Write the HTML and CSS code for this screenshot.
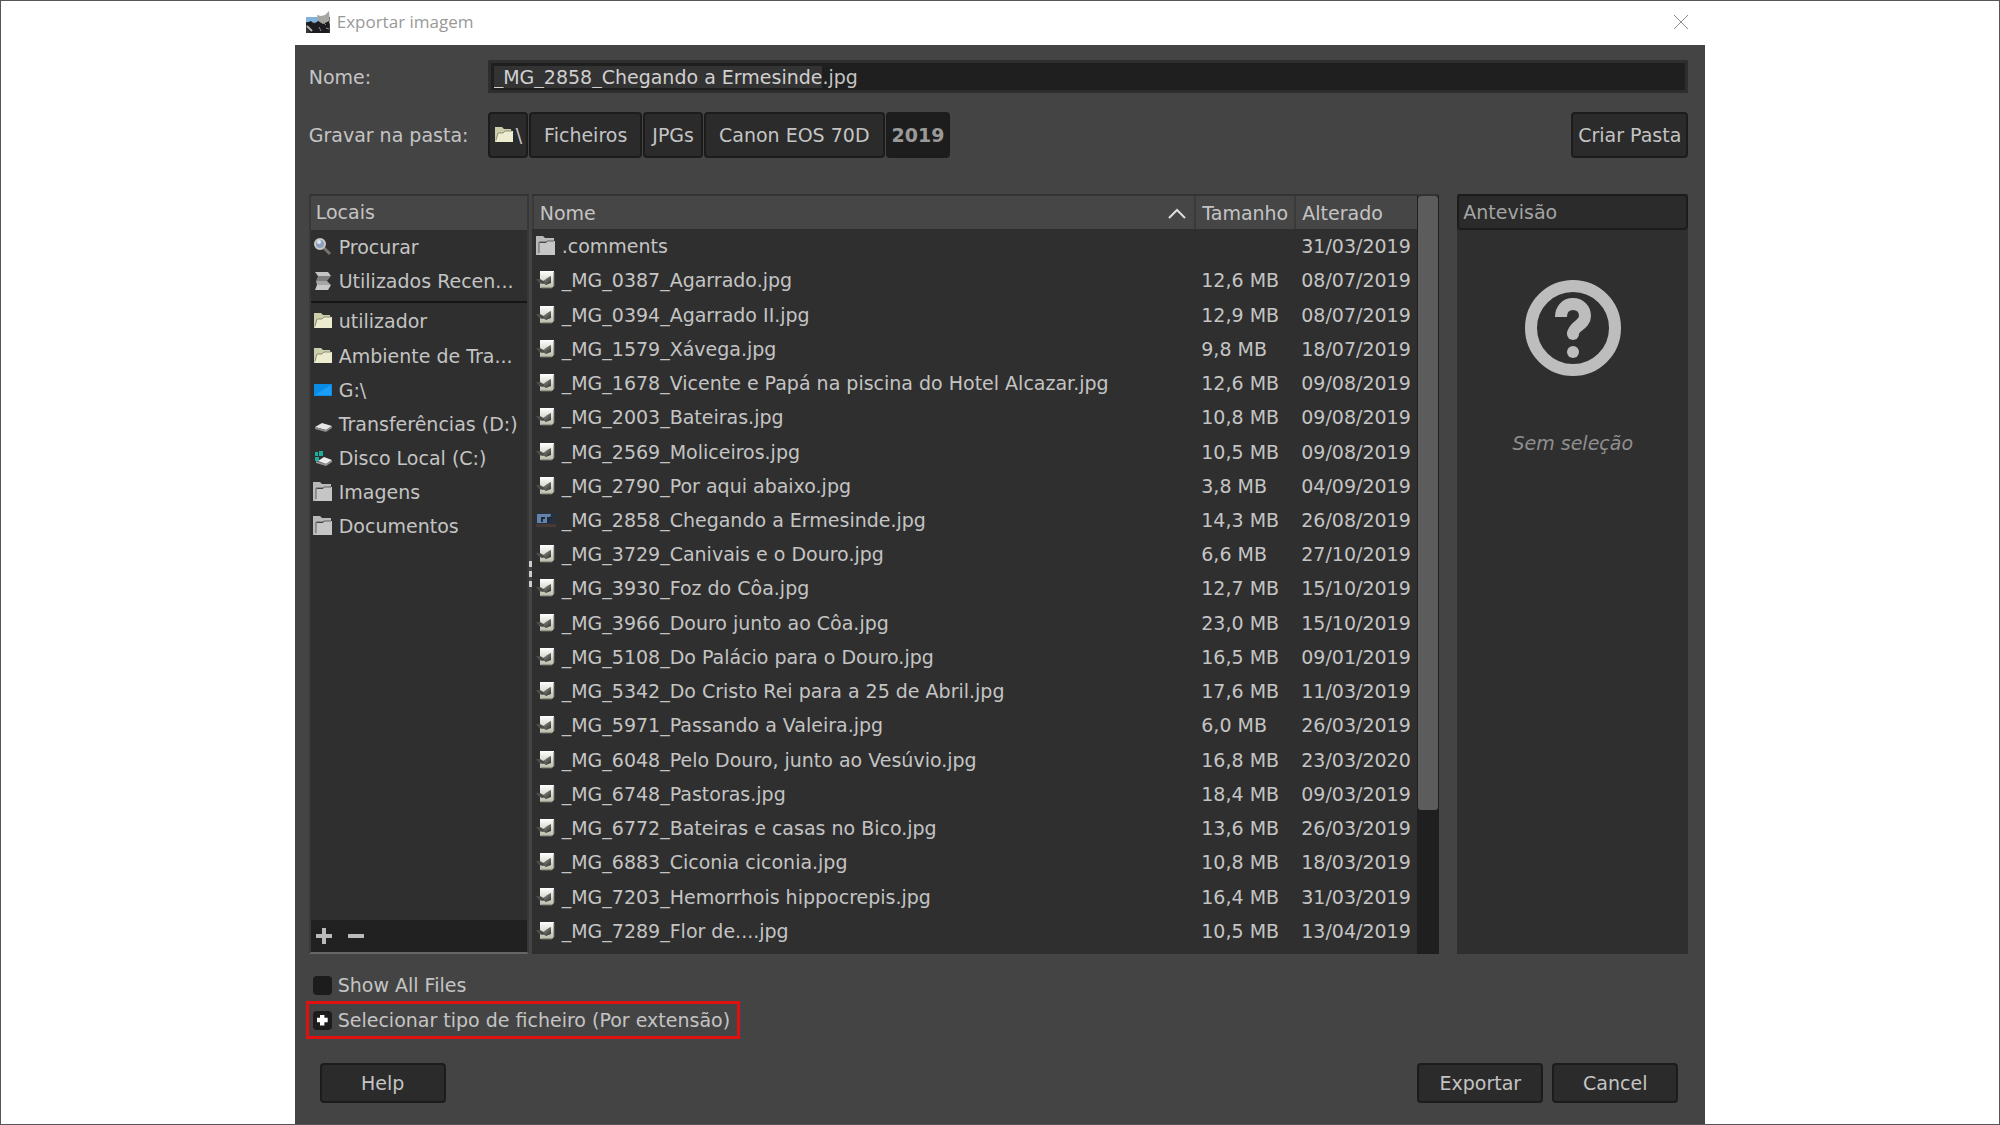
FILE: index.html
```
<!DOCTYPE html>
<html lang="pt">
<head>
    <meta charset="UTF-8">
    <meta name="viewport" content="width=device-width, initial-scale=1.0">
    <title>Exportar imagem</title>
    <link rel="stylesheet" href="styles.css">
</head>
<body>
    <svg class="sprite" aria-hidden="true">
        <linearGradient id="paper" x1="0" y1="0" x2="0" y2="1">
            <stop offset="0" stop-color="#ffffff"/>
            <stop offset="1" stop-color="#b9bba9"/>
        </linearGradient>
        <linearGradient id="brush" x1="0" y1="0" x2="1" y2="1">
            <stop offset="0" stop-color="#a5a5a0"/>
            <stop offset="1" stop-color="#2c2c2a"/>
        </linearGradient>
        <symbol id="icon-file" viewBox="0 0 20 20">
            <path d="M4 1h14v15l-2 2H4z" fill="url(#paper)"/>
            <path d="M5 12c3-1 5-4 10-6v7l-5 2z" fill="url(#brush)"/>
            <path d="M0 9h4l5 3-2 2-4-1z" fill="#4b4b47"/>
            <path d="M18 2v14l-2 2H5" fill="none" stroke="#6f7066"/>
        </symbol>
        <symbol id="icon-folder" viewBox="0 0 20 20">
            <path d="M0 0h7l2 2h9v4H4v13H0z" fill="#b9b9b9"/>
            <path d="M4 7h6l1-2h8v14H3V9z" fill="#c6c6c6"/>
            <path d="M3 17V6h7l1-1h7" fill="none" stroke="#5e5e5e"/>
        </symbol>
        <symbol id="icon-home" viewBox="0 0 20 20">
            <path d="M1 2h7l2 2h7v13H1z" fill="#cccda9"/>
            <path d="M4 8h5l2-2h8v11H2z" fill="#ecedd0"/>
            <path d="M2 15L4 8h5l2-2h7" fill="none" stroke="#8e8f74"/>
        </symbol>
        <symbol id="icon-search" viewBox="0 0 20 20">
            <path d="M11 11l6 6" stroke="#77736c" stroke-width="3"/>
            <circle cx="7" cy="7" r="5" fill="#8aa0bd" stroke="#c9c9c9" stroke-width="2"/>
            <circle cx="6" cy="5" r="2" fill="#dfe8f2"/>
        </symbol>
        <symbol id="icon-recent" viewBox="0 0 20 20">
            <path d="M2 1h13l3 4H5z" fill="#c4c4c4"/>
            <path d="M5 5h13l-4 5H3z" fill="#7d7d7d"/>
            <path d="M3 10h11l4 4H4z" fill="#a6a6a6"/>
            <path d="M4 14h14l-3 5H2z" fill="#c9c9c9"/>
        </symbol>
        <symbol id="icon-desktop" viewBox="0 0 20 20">
            <path d="M1 4h18v12H1z" fill="#0a8be6"/>
            <path d="M2 15L18 5v10z" fill="#1b9ff5"/>
        </symbol>
        <symbol id="icon-drive" viewBox="0 0 20 20">
            <path d="M2 13l7-4 10 3-6 4z" fill="#e6e6e6"/>
            <path d="M2 13l11 3 6-4v2l-6 4-11-3z" fill="#8a8a8a"/>
        </symbol>
        <symbol id="icon-system" viewBox="0 0 20 20">
            <path d="M2 4h3v4H2zM6 3h4v5H6zM2 9h4v4H2z" fill="#1fae9c"/>
            <path d="M5 13l6-4 8 3-6 4z" fill="#ececec"/>
            <path d="M3 13l10 3 6-4v2l-6 4-10-3z" fill="#8f9694"/>
        </symbol>
        <symbol id="icon-thumb" viewBox="0 0 20 20">
            <path d="M0 3h20v14H0z" fill="#27303f"/>
            <path d="M1 4h14l-2 9H1z" fill="#6483aa"/>
            <path d="M5 7h4v2H7v3H5zM11 7h5v2h-2v4h-3z" fill="#222a38"/>
            <path d="M0 14h20v3H0z" fill="#463a37"/>
        </symbol>
        <symbol id="icon-app" viewBox="0 0 24 24">
            <path d="M0 7h24v16H0z" fill="#35363b"/>
            <path d="M0 7h14l-2 6-12-1z" fill="#82b2dc"/>
            <path d="M11 5l4 1 4-1 4-4 1 12-4 4-5-2-3-5z" fill="#a5a5a1"/>
            <path d="M0 13l5-2 3 3 4-3 5 3 6-3v12H4z" fill="#1c1c20"/>
            <path d="M1 16l5 5" stroke="#b5b1aa" stroke-width="2"/>
            <path d="M17 12l3 3M13 17l2 4M20 18l3 1" stroke="#8d8a85"/>
        </symbol>
    </svg>

    <main class="dialog">
        <header class="titlebar">
            <svg class="app-icon"><use href="#icon-app"/></svg>
            <h1>Exportar imagem</h1>
            <button class="close" type="button" aria-label="Fechar">
                <svg viewBox="0 0 16 16"><path d="M1 1l14 14M15 1L1 15"/></svg>
            </button>
        </header>

        <form class="content">
            <div class="row">
                <label class="row-label" for="name">Nome:</label>
                <input class="name" type="text" id="name" value="_MG_2858_Chegando a Ermesinde.jpg" spellcheck="false">
            </div>

            <div class="row path-row">
                <span class="row-label">Gravar na pasta:</span>
                <nav class="path">
                    <button type="button" class="btn root"><svg class="icon"><use href="#icon-home"/></svg>\</button>
                    <button type="button" class="btn wide">Ficheiros</button>
                    <button type="button" class="btn">JPGs</button>
                    <button type="button" class="btn wide">Canon EOS 70D</button>
                    <button type="button" class="btn current">2019</button>
                </nav>
                <button type="button" class="btn create">Criar Pasta</button>
            </div>

            <div class="panels">
                <aside class="places">
                    <h2>Locais</h2>
                    <ul>
                        <li><svg class="icon"><use href="#icon-search"/></svg>Procurar</li>
                        <li><svg class="icon"><use href="#icon-recent"/></svg>Utilizados Recen...</li>
                        <li class="after-line"><svg class="icon"><use href="#icon-home"/></svg>utilizador</li>
                        <li><svg class="icon"><use href="#icon-home"/></svg>Ambiente de Tra...</li>
                        <li><svg class="icon"><use href="#icon-desktop"/></svg>G:\</li>
                        <li><svg class="icon"><use href="#icon-drive"/></svg>Transferências (D:)</li>
                        <li><svg class="icon"><use href="#icon-system"/></svg>Disco Local (C:)</li>
                        <li><svg class="icon"><use href="#icon-folder"/></svg>Imagens</li>
                        <li><svg class="icon"><use href="#icon-folder"/></svg>Documentos</li>
                    </ul>
                    <div class="places-tools">
                        <button type="button" aria-label="Adicionar"><svg viewBox="0 0 16 16"><path d="M8 0v16M0 8h16"/></svg></button>
                        <button type="button" aria-label="Remover"><svg viewBox="0 0 16 16"><path d="M0 8h16"/></svg></button>
                    </div>
                </aside>

                <div class="grip"><i></i><i></i><i></i></div>

                <section class="files">
                    <div class="files-list">
                        <table>
                            <thead>
                                <tr>
                                    <th><span class="sorted">Nome <svg viewBox="0 0 18 12"><path d="M1 11l8-8 8 8"/></svg></span></th>
                                    <th class="size">Tamanho</th>
                                    <th class="date">Alterado</th>
                                </tr>
                            </thead>
                            <tbody>
                                <tr><td><svg class="icon"><use href="#icon-folder"/></svg>.comments</td><td></td><td>31/03/2019</td></tr>
                                <tr><td><svg class="icon"><use href="#icon-file"/></svg>_MG_0387_Agarrado.jpg</td><td>12,6 MB</td><td>08/07/2019</td></tr>
                                <tr><td><svg class="icon"><use href="#icon-file"/></svg>_MG_0394_Agarrado II.jpg</td><td>12,9 MB</td><td>08/07/2019</td></tr>
                                <tr><td><svg class="icon"><use href="#icon-file"/></svg>_MG_1579_Xávega.jpg</td><td>9,8 MB</td><td>18/07/2019</td></tr>
                                <tr><td><svg class="icon"><use href="#icon-file"/></svg>_MG_1678_Vicente e Papá na piscina do Hotel Alcazar.jpg</td><td>12,6 MB</td><td>09/08/2019</td></tr>
                                <tr><td><svg class="icon"><use href="#icon-file"/></svg>_MG_2003_Bateiras.jpg</td><td>10,8 MB</td><td>09/08/2019</td></tr>
                                <tr><td><svg class="icon"><use href="#icon-file"/></svg>_MG_2569_Moliceiros.jpg</td><td>10,5 MB</td><td>09/08/2019</td></tr>
                                <tr><td><svg class="icon"><use href="#icon-file"/></svg>_MG_2790_Por aqui abaixo.jpg</td><td>3,8 MB</td><td>04/09/2019</td></tr>
                                <tr><td><svg class="icon"><use href="#icon-thumb"/></svg>_MG_2858_Chegando a Ermesinde.jpg</td><td>14,3 MB</td><td>26/08/2019</td></tr>
                                <tr><td><svg class="icon"><use href="#icon-file"/></svg>_MG_3729_Canivais e o Douro.jpg</td><td>6,6 MB</td><td>27/10/2019</td></tr>
                                <tr><td><svg class="icon"><use href="#icon-file"/></svg>_MG_3930_Foz do Côa.jpg</td><td>12,7 MB</td><td>15/10/2019</td></tr>
                                <tr><td><svg class="icon"><use href="#icon-file"/></svg>_MG_3966_Douro junto ao Côa.jpg</td><td>23,0 MB</td><td>15/10/2019</td></tr>
                                <tr><td><svg class="icon"><use href="#icon-file"/></svg>_MG_5108_Do Palácio para o Douro.jpg</td><td>16,5 MB</td><td>09/01/2019</td></tr>
                                <tr><td><svg class="icon"><use href="#icon-file"/></svg>_MG_5342_Do Cristo Rei para a 25 de Abril.jpg</td><td>17,6 MB</td><td>11/03/2019</td></tr>
                                <tr><td><svg class="icon"><use href="#icon-file"/></svg>_MG_5971_Passando a Valeira.jpg</td><td>6,0 MB</td><td>26/03/2019</td></tr>
                                <tr><td><svg class="icon"><use href="#icon-file"/></svg>_MG_6048_Pelo Douro, junto ao Vesúvio.jpg</td><td>16,8 MB</td><td>23/03/2020</td></tr>
                                <tr><td><svg class="icon"><use href="#icon-file"/></svg>_MG_6748_Pastoras.jpg</td><td>18,4 MB</td><td>09/03/2019</td></tr>
                                <tr><td><svg class="icon"><use href="#icon-file"/></svg>_MG_6772_Bateiras e casas no Bico.jpg</td><td>13,6 MB</td><td>26/03/2019</td></tr>
                                <tr><td><svg class="icon"><use href="#icon-file"/></svg>_MG_6883_Ciconia ciconia.jpg</td><td>10,8 MB</td><td>18/03/2019</td></tr>
                                <tr><td><svg class="icon"><use href="#icon-file"/></svg>_MG_7203_Hemorrhois hippocrepis.jpg</td><td>16,4 MB</td><td>31/03/2019</td></tr>
                                <tr><td><svg class="icon"><use href="#icon-file"/></svg>_MG_7289_Flor de....jpg</td><td>10,5 MB</td><td>13/04/2019</td></tr>
                            </tbody>
                        </table>
                    </div>
                    <div class="scrollbar"><div class="thumb"></div></div>
                </section>

                <aside class="preview">
                    <h2>Antevisão</h2>
                    <svg class="question" viewBox="0 0 96 96">
                        <circle cx="48" cy="48" r="42"/>
                        <path d="M36 37c0-8 5-13 12-13s12 5 12 12c0 9-12 10-12 18"/>
                        <circle class="dot" cx="48" cy="54" r="6"/>
                        <circle class="dot" cx="48" cy="72" r="6"/>
                    </svg>
                    <p>Sem seleção</p>
                </aside>
            </div>

            <div class="options">
                <label class="option"><input type="checkbox">Show All Files</label>
                <label class="option highlighted"><input type="checkbox" checked>Selecionar tipo de ficheiro (Por extensão)</label>
            </div>

            <footer class="actions">
                <button type="button" class="btn action help">Help</button>
                <button type="submit" class="btn action">Exportar</button>
                <button type="button" class="btn action">Cancel</button>
            </footer>
        </form>
    </main>

    <script>
        // select the file name without its extension
        const nameInput = document.getElementById('name');
        nameInput.focus();
        nameInput.setSelectionRange(0, nameInput.value.lastIndexOf('.'));
    </script>
</body>
</html>
```
FILE: styles.css
```
* {
    box-sizing: border-box;
}
body {
    margin: 0;
    min-height: 100vh;
    display: flex;
    justify-content: center;
    border: 1px solid #565656;
    background: #fff;
    color: #c4c4c4;
    font-family: "DejaVu Sans", sans-serif;
    font-size: 19px;
    line-height: 24px;
}
button, input {
    font: inherit;
    color: inherit;
}
.sprite {
    position: absolute;
    width: 0;
    height: 0;
}
.icon {
    width: 20px;
    height: 20px;
    flex: none;
    vertical-align: -3px;
}
.dialog {
    width: 70.6%;
    display: flex;
    flex-direction: column;
}

/* title bar */
.titlebar {
    height: 44px;
    padding: 0 10px 2px 11px;
    display: flex;
    align-items: center;
    gap: 7px;
    color: #999;
}
.titlebar h1 {
    flex: 1;
    margin: 0;
    font-family: "Open Sans", sans-serif;
    font-size: 17px;
    font-weight: normal;
}
.app-icon {
    width: 24px;
    height: 24px;
}
.close {
    padding: 6px;
    border: 0;
    background: none;
    line-height: 0;
}
.close svg {
    width: 16px;
    height: 16px;
    stroke: #8c8c8c;
    fill: none;
}

.content {
    flex: 1;
    display: flex;
    flex-direction: column;
    padding: 15px 17px 21px 14px;
    background: #444;
}
.row {
    display: flex;
    align-items: center;
}
.row-label {
    width: 179px;
}
.name {
    flex: 1;
    height: 33px;
    padding: 0 3px;
    border: 3px solid #2e2e2e;
    background: #1f1f1f;
    outline: 0;
}
.name::selection {
    background: #333;
    color: #d0d0d0;
}
.path-row {
    margin: 19px 0 36px;
}
.path {
    flex: 1;
    display: flex;
    gap: 1px;
}
.btn {
    height: 46px;
    padding: 0 5px;
    border: 2px solid #1c1c1c;
    border-radius: 4px;
    background: #2b2b2b;
}
.path .btn {
    padding: 0 7px;
}
.path .wide {
    padding: 0 13px;
}
.path .root {
    padding: 0 4px;
    display: flex;
    align-items: center;
    gap: 2px;
}
.path .current {
    padding: 0 4px;
    background: #1d1d1d;
    color: #999;
    font-weight: bold;
}

.panels {
    flex: 1;
    display: flex;
}
h2 {
    margin: 0;
    font-size: 19px;
    font-weight: normal;
}

/* places */
.places {
    width: 220px;
    display: flex;
    flex-direction: column;
    border: 2px solid #383838;
    border-top-color: #333;
    border-bottom-color: #666;
    background: #2f2f2f;
}
.places h2 {
    height: 34px;
    padding: 4px 5px;
    background: #464646;
}
.places ul {
    flex: 1;
    margin: 0;
    padding: 0;
    list-style: none;
}
.places li {
    height: 34px;
    padding-left: 2px;
    display: flex;
    align-items: center;
    gap: 6px;
    white-space: nowrap;
}
.places .after-line {
    height: 38px;
    margin-top: 3px;
    border-top: 2px solid #151515;
}
.places-tools {
    height: 32px;
    padding: 0 5px;
    display: flex;
    align-items: center;
    gap: 16px;
    background: #212121;
}
.places-tools button {
    padding: 0;
    border: 0;
    background: none;
    line-height: 0;
}
.places-tools svg {
    width: 16px;
    height: 16px;
    stroke: #bbb;
    stroke-width: 4;
}

.grip {
    width: 3px;
    display: flex;
    flex-direction: column;
    justify-content: center;
    gap: 4px;
}
.grip i {
    height: 6px;
    background: #ccc;
}

/* file list */
.files {
    flex: 1;
    display: flex;
    border-top: 2px solid #333;
    background: #2f2f2f;
}
.files-list {
    flex: 1;
    display: flex;
    padding-bottom: 6px;
}
table {
    width: 100%;
    height: 100%;
    border-collapse: collapse;
    table-layout: fixed;
}
th, td {
    padding: 0 0 0 6px;
    text-align: left;
    font-weight: normal;
    white-space: nowrap;
}
td:first-child {
    padding-left: 3px;
}
td .icon {
    margin-right: 6px;
}
th {
    height: 33px;
    background: #464646;
    border-left: 2px solid #3a3a3a;
}
th.size {
    width: 100px;
}
th.date {
    width: 122px;
}
.sorted {
    display: flex;
    align-items: center;
    justify-content: space-between;
    padding-right: 8px;
}
.sorted svg {
    width: 18px;
    height: 12px;
    fill: none;
    stroke: #ddd;
    stroke-width: 2;
}
.scrollbar {
    width: 22px;
    padding: 0 1px;
    background: #1f1f1f;
}
.thumb {
    height: 81%;
    border-radius: 3px;
    background: #5c5c5c;
}

/* preview */
.preview {
    width: 231px;
    margin-left: 18px;
    background: #2f2f2f;
    text-align: center;
}
.preview h2 {
    height: 36px;
    padding: 4px;
    border: 2px solid #1c1c1c;
    border-radius: 4px;
    background: #2b2b2b;
    color: #a4a4a4;
    text-align: left;
}
.question {
    width: 96px;
    height: 96px;
    margin: 50px 0;
    fill: none;
    stroke: #bdbdbd;
    stroke-width: 12;
}
.question .dot {
    fill: #bdbdbd;
    stroke: none;
}
.preview p {
    margin: 0;
    color: #8f8f8f;
    font-style: italic;
}

/* options */
.options {
    margin-top: 15px;
    display: flex;
    flex-direction: column;
    align-items: flex-start;
}
.option {
    height: 32px;
    padding-left: 4px;
    display: flex;
    align-items: center;
    gap: 6px;
}
.option.highlighted {
    height: 38px;
    margin-left: -3px;
    padding: 0 7px 0 4px;
    border: 3px solid #e01010;
}
.option input {
    appearance: none;
    width: 19px;
    height: 19px;
    margin: 0;
    display: grid;
    place-items: center;
    border-radius: 4px;
    background: #1c1c1c;
}
.option input:checked::before {
    content: "";
    width: 11px;
    height: 11px;
    background: #fff;
    clip-path: polygon(30% 0, 70% 0, 70% 30%, 100% 30%, 100% 70%, 70% 70%, 70% 100%, 30% 100%, 30% 70%, 0 70%, 0 30%, 30% 30%);
}

.actions {
    margin: 24px 10px 0 11px;
    display: flex;
    gap: 9px;
}
.btn.action {
    width: 126px;
    height: 40px;
}
.help {
    margin-right: auto;
}
```
